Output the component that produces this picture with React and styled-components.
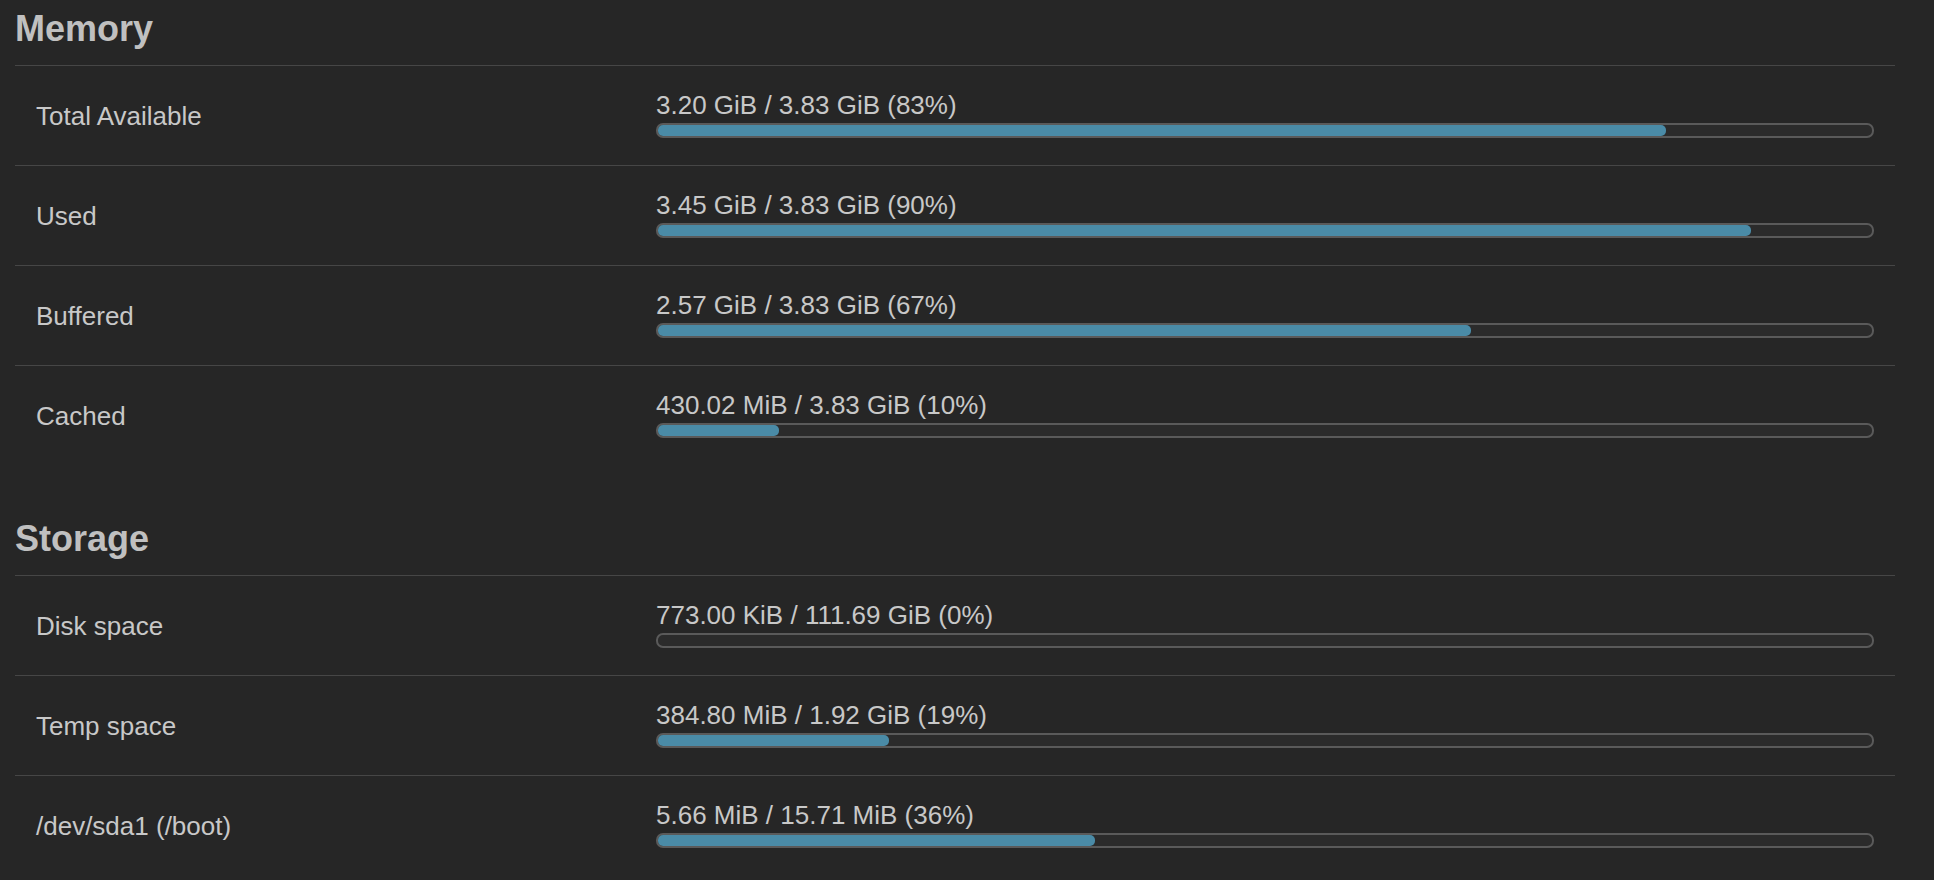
import React from "react";
import styled, { createGlobalStyle } from "styled-components";

const sections = [
  {
    title: "Memory",
    rows: [
      { label: "Total Available", value: "3.20 GiB / 3.83 GiB (83%)", percent: 83 },
      { label: "Used", value: "3.45 GiB / 3.83 GiB (90%)", percent: 90 },
      { label: "Buffered", value: "2.57 GiB / 3.83 GiB (67%)", percent: 67 },
      { label: "Cached", value: "430.02 MiB / 3.83 GiB (10%)", percent: 10 },
    ],
  },
  {
    title: "Storage",
    rows: [
      { label: "Disk space", value: "773.00 KiB / 111.69 GiB (0%)", percent: 0 },
      { label: "Temp space", value: "384.80 MiB / 1.92 GiB (19%)", percent: 19 },
      { label: "/dev/sda1 (/boot)", value: "5.66 MiB / 15.71 MiB (36%)", percent: 36 },
    ],
  },
];

const GlobalStyle = createGlobalStyle`
  html, body {
    margin: 0;
    background: #262626;
  }
  body {
    font-family: "Liberation Sans", Arial, sans-serif;
    color: #c6c6c6;
  }
`;

const Page = styled.div`
  display: flex;
  flex-direction: column;
  gap: 53px;
  padding: 8px 39px 0 15px;
`;

const Section = styled.section`
  display: flex;
  flex-direction: column;
`;

const Heading = styled.h3`
  margin: 0;
  font-size: 36px;
  line-height: 41px;
  font-weight: 700;
  color: #c0c0c0;
  padding-bottom: 16px;
  border-bottom: 1px solid #464646;
`;

const Row = styled.div`
  display: grid;
  grid-template-columns: 620px 1fr;
  align-items: center;
  height: 99px;
  padding: 0 21px;
  border-bottom: 1px solid #464646;

  &:last-child {
    border-bottom: none;
  }
`;

const Label = styled.div`
  font-size: 26px;
  line-height: 30px;
  color: #c8c8c8;
`;

const Value = styled.div`
  display: flex;
  flex-direction: column;
  padding-bottom: 4px;
`;

const ValueText = styled.div`
  font-size: 26px;
  line-height: 30px;
  color: #c8c8c8;
`;

const Track = styled.div`
  margin-top: 3px;
  height: 11px;
  border: 2px solid #5a5a5a;
  border-radius: 7px;
  background: #2b2b2b;
  overflow: hidden;
`;

const Fill = styled.div`
  height: 100%;
  background: #4a8ba7;
  border-radius: 0 5px 5px 0;
`;

const ProgressBar = ({ percent }) => (
  <Track>
    <Fill style={{ width: `${percent}%` }} />
  </Track>
);

const App = () => {
  return (
    <>
      <GlobalStyle />
      <Page>
        {sections.map((section) => (
          <Section key={section.title}>
            <Heading>{section.title}</Heading>
            {section.rows.map((row) => (
              <Row key={row.label}>
                <Label>{row.label}</Label>
                <Value>
                  <ValueText>{row.value}</ValueText>
                  <ProgressBar percent={row.percent} />
                </Value>
              </Row>
            ))}
          </Section>
        ))}
      </Page>
    </>
  );
};

export default App;
